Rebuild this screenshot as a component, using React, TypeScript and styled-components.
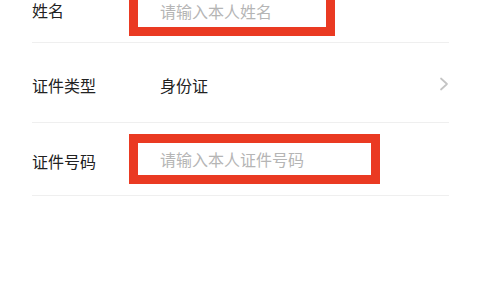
import React from 'react';
import styled, { createGlobalStyle } from 'styled-components';

const GlobalStyle = createGlobalStyle`
  html, body {
    margin: 0;
    padding: 0;
    background: #ffffff;
    overflow: hidden;
  }
  body {
    font-family: 'Noto Sans CJK SC', 'Noto Sans', sans-serif;
  }
`;

const red = '#ea3a22';

const Page = styled.div`
  width: 480px;
  height: 300px;
  background: #fff;
  overflow: hidden;
`;

const Form = styled.div`
  margin-top: -26px;
  padding: 0 31px 0 32px;
`;

const Row = styled.div<{ $height: number }>`
  height: ${(p) => p.$height}px;
  box-sizing: border-box;
  padding-top: 4px;
  display: flex;
  align-items: center;
  border-bottom: 1px solid #efefef;
`;

const Label = styled.div`
  width: 128px;
  flex-shrink: 0;
  font-size: 16px;
  color: #222;
`;

const Value = styled.div`
  flex: 1;
  font-size: 16px;
  color: #222;
`;

// red annotation frame around the input
const Frame = styled.div<{ $width: number; $shift: number }>`
  width: ${(p) => p.$width}px;
  height: 50px;
  box-sizing: border-box;
  margin-left: -31px;
  margin-top: ${(p) => p.$shift}px;
  border: 9px solid ${red};
  background: #fff;
  display: flex;
  align-items: center;
  padding-left: 22px;
`;

const Input = styled.input`
  border: none;
  outline: none;
  background: transparent;
  width: 100%;
  padding: 0;
  font-family: 'Noto Sans CJK SC', 'Noto Sans', sans-serif;
  font-size: 16px;
  color: #222;
  &::placeholder {
    color: #b5b5b5;
  }
`;

const Chevron = () => (
  <svg width="10" height="14" viewBox="0 0 10 14" style={{ flexShrink: 0, marginTop: -2 }}>
    <polyline
      points="2,1.5 8,7 2,12.5"
      fill="none"
      stroke="#c4c4c4"
      strokeWidth="1.7"
      strokeLinecap="round"
      strokeLinejoin="round"
    />
  </svg>
);

export default function App() {
  return (
    <Page>
      <GlobalStyle />
      <Form>
        <Row $height={69}>
          <Label>姓名</Label>
          <Frame $width={206} $shift={2}>
            <Input placeholder="请输入本人姓名" />
          </Frame>
        </Row>
        <Row $height={80}>
          <Label>证件类型</Label>
          <Value>身份证</Value>
          <Chevron />
        </Row>
        <Row $height={73}>
          <Label>证件号码</Label>
          <Frame $width={251} $shift={-4}>
            <Input placeholder="请输入本人证件号码" />
          </Frame>
        </Row>
      </Form>
    </Page>
  );
}
